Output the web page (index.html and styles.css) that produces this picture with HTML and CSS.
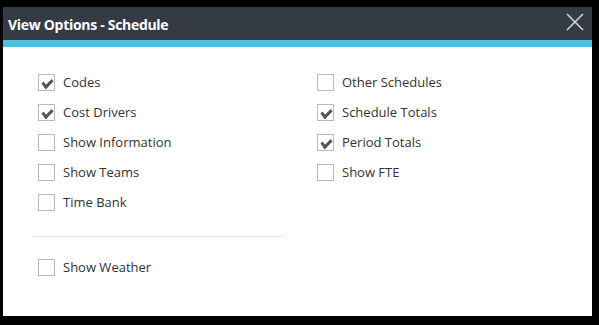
FILE: index.html
```html
<!DOCTYPE html>
<html lang="en">
<head>
  <meta charset="UTF-8">
  <title>View Options - Schedule</title>
  <link rel="stylesheet" href="styles.css">
</head>
<body>

<div class="dialog">
  <div class="dialog-header">
    <span class="dialog-title">View Options - Schedule</span>
    <button class="close-btn" aria-label="Close">
      <svg width="18" height="18" viewBox="0 0 18 18"><path d="M1 1 L17 17 M17 1 L1 17" stroke="#d4d4d4" stroke-width="1.6" fill="none"/></svg>
    </button>
  </div>
  <div class="dialog-strip"></div>

  <div class="dialog-body">
    <div class="columns">
      <div class="col">
        <label class="opt"><span class="box checked"></span>Codes</label>
        <label class="opt"><span class="box checked"></span>Cost Drivers</label>
        <label class="opt"><span class="box"></span>Show Information</label>
        <label class="opt"><span class="box"></span>Show Teams</label>
        <label class="opt"><span class="box"></span>Time Bank</label>
        <hr class="divider">
        <label class="opt"><span class="box"></span>Show Weather</label>
      </div>
      <div class="col">
        <label class="opt"><span class="box"></span>Other Schedules</label>
        <label class="opt"><span class="box checked"></span>Schedule Totals</label>
        <label class="opt"><span class="box checked"></span>Period Totals</label>
        <label class="opt"><span class="box"></span>Show FTE</label>
      </div>
    </div>
  </div>
</div>

</body>
</html>
```

FILE: styles.css
```css
body {
  margin: 0;
  padding: 7px 7px 0 3px;
  background: #000;
  font-family: 'Open Sans', sans-serif;
  height: 325px;
  box-sizing: border-box;
  overflow: hidden;
}

.dialog {
  width: 589px;
  height: 309px;
  background: #fff;
}

.dialog-header {
  height: 33px;
  background: #353b45;
  display: flex;
  align-items: center;
  justify-content: space-between;
  padding: 0 8px 0 5px;
}

.dialog-title {
  color: #fff;
  font-weight: 700;
  font-size: 14px;
  letter-spacing: -0.3px;
  padding-top: 1px;
}

.close-btn {
  border: none;
  background: none;
  padding: 0;
  width: 18px;
  height: 18px;
  margin-top: -3px;
  cursor: pointer;
}

.dialog-strip {
  height: 7px;
  background: #4ec0e4;
}

.dialog-body {
  padding: 20px 0 0 30px;
}

.columns {
  display: flex;
  gap: 29px;
}

.col {
  width: 250px;
}

.opt {
  display: flex;
  align-items: center;
  height: 30px;
  padding-left: 5px;
  font-size: 13px;
  color: #333;
  cursor: pointer;
}

.box {
  width: 15px;
  height: 15px;
  border: 1px solid #b9b9b9;
  margin-right: 8px;
  position: relative;
  flex-shrink: 0;
}

.box.checked::after {
  content: "";
  position: absolute;
  left: 3px;
  top: 1px;
  width: 8px;
  height: 4px;
  border-left: 3px solid #555;
  border-bottom: 3px solid #555;
  transform: translate(0, 3px) rotate(-45deg) skewX(-8deg);
  transform-origin: center;
}

.divider {
  border: none;
  border-top: 1px solid #d3e6ef;
  margin: 19px 0 15px;
}
```
